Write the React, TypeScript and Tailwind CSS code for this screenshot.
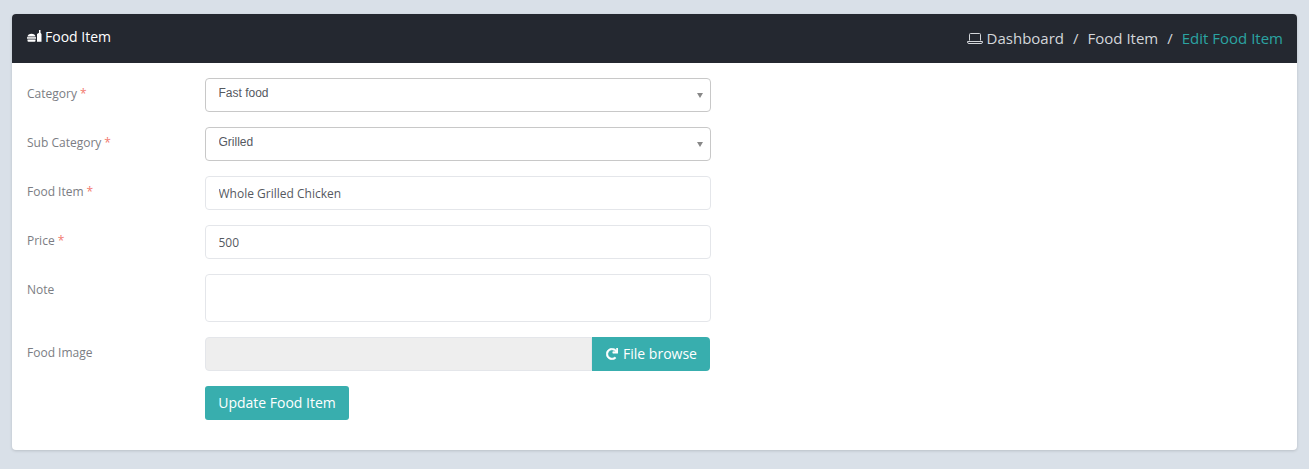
import { FaRedo } from 'react-icons/fa'

function FoodIcon() {
  return (
    <svg width="15" height="12" viewBox="0 0 15 12" fill="#fff" className="shrink-0">
      <path d="M0.500 6.500C0.500 5 2.500 3.800 4.500 3.800s4 1.200 4 2.700H.5z" />
      <rect x="0" y="7.200" width="9" height="1.500" />
      <path d="M.5 9.500h8v1.300a1 1 0 0 1-1 1h-6a1 1 0 0 1-1-1V9.500z" />
      <path d="M10 4l2-1.200V0h1.500v2.800L14.500 4v7.800H10z" />
    </svg>
  )
}

function LaptopIcon() {
  return (
    <svg width="16" height="11" viewBox="0 0 16 11" fill="none" stroke="#d3d6da" strokeWidth="1" className="mr-[4px] shrink-0">
      <path d="M2.500 7.500v-6a1 1 0 0 1 1-1h9a1 1 0 0 1 1 1v6" />
      <path d="M0.500 8.500h15v.500a1.500 1.500 0 0 1-1.500 1.500H2A1.500 1.500 0 0 1 .5 9z" />
    </svg>
  )
}

function Label({ text, required }: { text: string; required?: boolean }) {
  return (
    <label className="w-[178px] shrink-0 pt-[6px] text-[12px] leading-[20px] text-[#7b7d83]">
      {text}
      {required && <span className="ml-[3px] text-[#f27a70]">*</span>}
    </label>
  )
}

function SelectRow({ label, value }: { label: string; value: string }) {
  return (
    <div className="flex">
      <Label text={label} required />
      <div className="relative h-[34px] w-[506px]">
        <select
          defaultValue={value}
          className="h-full w-full appearance-none rounded-[4px] border border-[#c8c8c8] bg-white pb-[4px] pl-[12.500px] pr-[24px] font-['Liberation_Sans',sans-serif] text-[12px] text-[#55595f] outline-none"
        >
          <option>{value}</option>
        </select>
        <span className="absolute right-[8px] top-[15px] h-0 w-0 border-x-[3px] border-t-[5px] border-x-transparent border-t-[#888888]" />
      </div>
    </div>
  )
}

function InputRow({ label, value }: { label: string; value: string }) {
  return (
    <div className="flex">
      <Label text={label} required />
      <input
        defaultValue={value}
        className="h-[34px] w-[506px] rounded-[4px] border border-[#e4e6ea] bg-white px-[12.500px] text-[12px] text-[#55595f] outline-none"
      />
    </div>
  )
}

export default function App() {
  return (
    <div className="h-[469px] bg-[#d9e0e8] px-[12px] pt-[14px] font-['Open_Sans',sans-serif]">
      <div className="h-[436px] overflow-hidden rounded-[4px] bg-white shadow-[0_1px_3px_rgba(0,0,0,0.15)]">
        <div className="flex h-[49px] items-center justify-between bg-[#242830] pl-[15px] pr-[14px]">
          <h1 className="flex items-center gap-[3px] pb-[5px] text-[14px] font-normal text-white">
            <FoodIcon />
            Food Item
          </h1>
          <nav className="flex items-center text-[15px] text-[#d3d6da]">
            <LaptopIcon />
            <span>Dashboard</span>
            <span className="mx-[9px]">/</span>
            <span>Food Item</span>
            <span className="mx-[9px]">/</span>
            <span className="text-[#2ba4a2]">Edit Food Item</span>
          </nav>
        </div>

        <form className="flex flex-col gap-[15px] pl-[15px] pt-[15px]">
          <SelectRow label="Category" value="Fast food" />
          <SelectRow label="Sub Category" value="Grilled" />
          <InputRow label="Food Item" value="Whole Grilled Chicken" />
          <InputRow label="Price" value="500" />
          <div className="flex">
            <Label text="Note" />
            <textarea className="h-[48px] w-[506px] resize-none rounded-[4px] border border-[#e4e6ea] bg-white outline-none" />
          </div>
          <div className="flex">
            <Label text="Food Image" />
            <div className="flex h-[34px] w-[505px]">
              <div className="flex-1 rounded-l-[4px] border border-[#e4e6ea] bg-[#eeeeee]" />
              <button
                type="button"
                className="flex w-[118px] items-center justify-center gap-[5px] rounded-r-[4px] bg-[#38aeae] pb-[1px] pl-[1px] text-[14px] text-white"
              >
                <FaRedo className="h-[12px] w-[12px] stroke-[20]" />
                File browse
              </button>
            </div>
          </div>
          <div className="pl-[178px]">
            <button
              type="button"
              className="h-[34px] w-[144px] rounded-[3px] bg-[#38aeae] pb-[1px] text-[14px] text-white"
            >
              Update Food Item
            </button>
          </div>
        </form>
      </div>
    </div>
  )
}
